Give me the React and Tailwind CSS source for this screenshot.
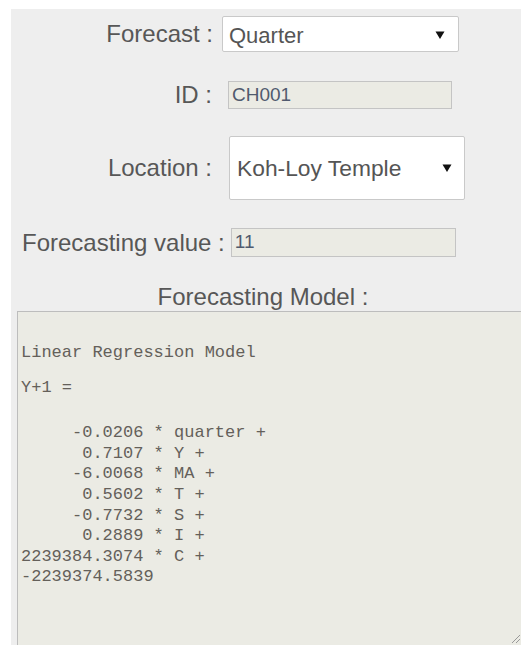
import React from "react";

const sans = { fontFamily: '"Liberation Sans", Arial, sans-serif' };
const mono = { fontFamily: '"Liberation Mono", "DejaVu Sans Mono", monospace' };

function Arrow() {
  return (
    <svg width="10" height="10" viewBox="0 0 10 10" className="shrink-0">
      <path d="M0.5 1.5 L9.5 1.5 L5 9 Z" fill="#111" />
    </svg>
  );
}

function Select({ value, className }) {
  return (
    <div
      className={
        "flex items-center justify-between bg-white border border-[#c9c9c9] rounded-[2px] text-[#555] " +
        className
      }
    >
      <span>{value}</span>
      <Arrow />
    </div>
  );
}

const lines = [
  "     -0.0206 * quarter +",
  "      0.7107 * Y +",
  "     -6.0068 * MA +",
  "      0.5602 * T +",
  "     -0.7732 * S +",
  "      0.2889 * I +",
  "2239384.3074 * C +",
  "-2239374.5839",
];

export default function App() {
  return (
    <div className="w-[521px] h-[645px] bg-white pt-[9px] pl-[11px] overflow-hidden" style={sans}>
      <div className="w-[510px] h-[636px] bg-[#eeeeee] text-[#575757] flex flex-col">
        {/* Forecast period */}
        <div className="flex items-center mt-[7px] h-[36px]">
          <div className="w-[202px] text-right text-[24px] leading-none">Forecast :</div>
          <Select
            value="Quarter"
            className="ml-[9px] w-[237px] h-[36px] pl-[6px] pr-[13px] text-[22px] pt-[2px]"
          />
        </div>

        {/* ID */}
        <div className="flex items-center mt-[29px] h-[28px]">
          <div className="w-[201px] text-right text-[24px] leading-none">ID :</div>
          <div className="ml-[16px] w-[224px] h-[28px] bg-[#ebebe4] border border-[#c4c4c4] text-[19px] text-[#505a6e] pl-[3px] flex items-center">
            CH001
          </div>
        </div>

        {/* Location */}
        <div className="flex items-center mt-[27px] h-[64px]">
          <div className="w-[201px] text-right text-[24px] leading-none">Location :</div>
          <Select
            value="Koh-Loy Temple"
            className="ml-[17px] w-[236px] h-[64px] pl-[7px] pr-[12px] text-[22.8px]"
          />
        </div>

        {/* Forecasting value */}
        <div className="flex items-center mt-[28px] h-[29px]">
          <div className="pl-[11px] text-[24px] leading-none">Forecasting value :</div>
          <div className="ml-[6px] w-[225px] h-[29px] bg-[#ebebe4] border border-[#c4c4c4] text-[19px] text-[#505a6e] pl-[3px] flex items-center">
            11
          </div>
        </div>

        {/* Model */}
        <div className="text-center text-[24px] leading-none mt-[28px] pr-[6px]">Forecasting Model :</div>

        <div className="relative ml-[6px] mt-[2px] w-[504px] flex-1 bg-[#ebebe4] border border-[#bdbdbd] border-r-0 border-b-0 text-[#64605a] text-[17px]" style={mono}>
          <div className="pl-[3px] pt-[31px] whitespace-pre leading-[20.6px]">
            <div>Linear Regression Model</div>
            <div className="mt-[14px]">Y+1 =</div>
            <div className="mt-[25px]">
              {lines.map((l) => (
                <div key={l}>{l}</div>
              ))}
            </div>
          </div>
          <svg width="12" height="12" viewBox="0 0 12 12" className="absolute right-[0px] bottom-[1px]">
            <path d="M11 3 L3 11 M11 7 L7 11" stroke="#999" strokeWidth="1" />
          </svg>
        </div>
      </div>
    </div>
  );
}
